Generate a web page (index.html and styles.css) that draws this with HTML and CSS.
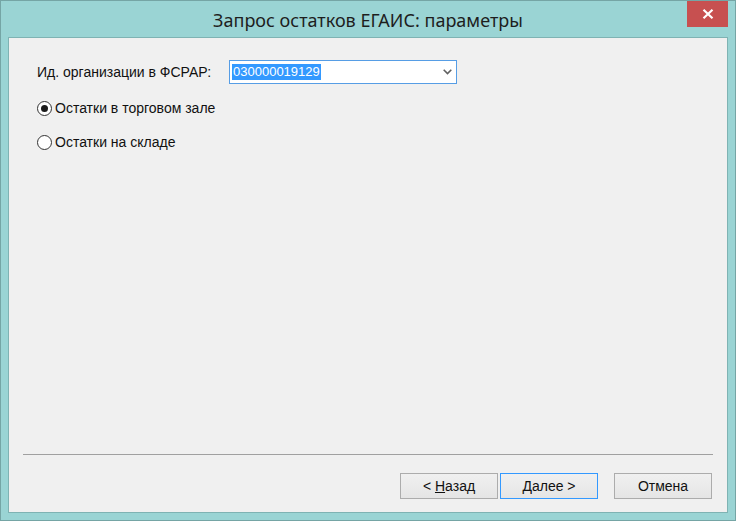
FILE: index.html
```html
<!DOCTYPE html>
<html lang="ru">
<head>
    <meta charset="UTF-8" />
    <title>Запрос остатков ЕГАИС: параметры</title>
    <link rel="stylesheet" href="styles.css">
</head>
<body>
    <div class="window">
        <header class="titlebar">
            <span class="title">Запрос остатков ЕГАИС: параметры</span>
            <button class="close" type="button" aria-label="Закрыть">
                <svg width="12" height="10" viewBox="0 0 12 10">
                    <path d="M1.5 0.8 L10.5 9.2 M10.5 0.8 L1.5 9.2" stroke="#fff" stroke-width="2.2" fill="none" />
                </svg>
            </button>
        </header>

        <main class="client">
            <section class="params">
                <div class="field-row">
                    <label class="field-label" for="fsrar">Ид. организации в ФСРАР:</label>
                    <div class="combo" id="fsrar">
                        <span class="combo-value">030000019129</span>
                        <svg class="combo-arrow" width="9" height="6" viewBox="0 0 9 6">
                            <path d="M0.7 0.7 L4.5 4.5 L8.3 0.7" stroke="#606060" stroke-width="1.6" fill="none" />
                        </svg>
                    </div>
                </div>

                <label class="radio">
                    <span class="radio-mark checked"></span>
                    Остатки в торговом зале
                </label>
                <label class="radio">
                    <span class="radio-mark"></span>
                    Остатки на складе
                </label>
            </section>

            <div class="separator"></div>

            <footer class="buttons">
                <button class="btn" type="button">&lt; <u>Н</u>азад</button>
                <button class="btn default" type="button">Далее &gt;</button>
                <button class="btn cancel" type="button">Отмена</button>
            </footer>
        </main>
    </div>
</body>
</html>
```

FILE: styles.css
```css
/* Reset */
* {
    margin: 0;
    padding: 0;
    box-sizing: border-box;
}

body {
    font-family: 'Liberation Sans', Arial, sans-serif;
    font-size: 14px;
    color: #111;
    background: #fff;
}

/* Window frame */
.window {
    position: relative;
    width: 736px;
    height: 521px;
    border: 1px solid #75a5a5;
    background-color: #9ad4d4;
    padding: 0 7px 7px;
    display: flex;
    flex-direction: column;
}

.titlebar {
    height: 36px;
    display: flex;
    align-items: center;
    justify-content: center;
    padding-top: 2px;
}

.title {
    font-family: 'Noto Sans', 'Open Sans', sans-serif;
    font-size: 18px;
    color: #1e1e1e;
}

.close {
    position: absolute;
    top: 0;
    right: 7px;
    width: 41px;
    height: 26px;
    border: none;
    background-color: #c75050;
    display: flex;
    align-items: center;
    justify-content: center;
}

/* Client area */
.client {
    flex: 1;
    border: 1px solid #7fb3b3;
    background-color: #f0f0f0;
    display: flex;
    flex-direction: column;
}

.params {
    flex: 1;
    padding: 22px 0 0 28px;
}

.field-row {
    display: flex;
    align-items: center;
}

.field-label {
    width: 192px;
}

.combo {
    width: 228px;
    height: 24px;
    border: 1px solid #569de5;
    background: #fff;
    display: flex;
    align-items: center;
    justify-content: space-between;
    padding: 0 4px 0 2px;
}

.combo-value {
    background-color: #3399ff;
    color: #fff;
    font-size: 13px;
    line-height: 16px;
    padding: 0 1px;
}

/* Radio buttons */
.radio {
    display: flex;
    align-items: center;
    gap: 3px;
    height: 20px;
    margin-top: 14px;
}

.radio-mark {
    width: 15px;
    height: 15px;
    border: 1px solid #333;
    border-radius: 50%;
    background: #fff;
    display: flex;
    align-items: center;
    justify-content: center;
}

.radio-mark.checked::after {
    content: '';
    width: 7px;
    height: 7px;
    border-radius: 50%;
    background: #1a1a1a;
}

.separator {
    margin: 0 14px;
    border-top: 1px solid #a0a0a0;
}

/* Wizard buttons */
.buttons {
    display: flex;
    justify-content: flex-end;
    gap: 2px;
    margin-top: 18px;
    padding: 0 15px 13px 0;
}

.btn {
    width: 98px;
    height: 26px;
    border: 1px solid #acacac;
    background: linear-gradient(#f0f0f0, #e5e5e5);
    font-family: inherit;
    font-size: 14px;
    color: #111;
}

.btn.default {
    border-color: #3399ff;
}

.btn.cancel {
    margin-left: 14px;
}
```
